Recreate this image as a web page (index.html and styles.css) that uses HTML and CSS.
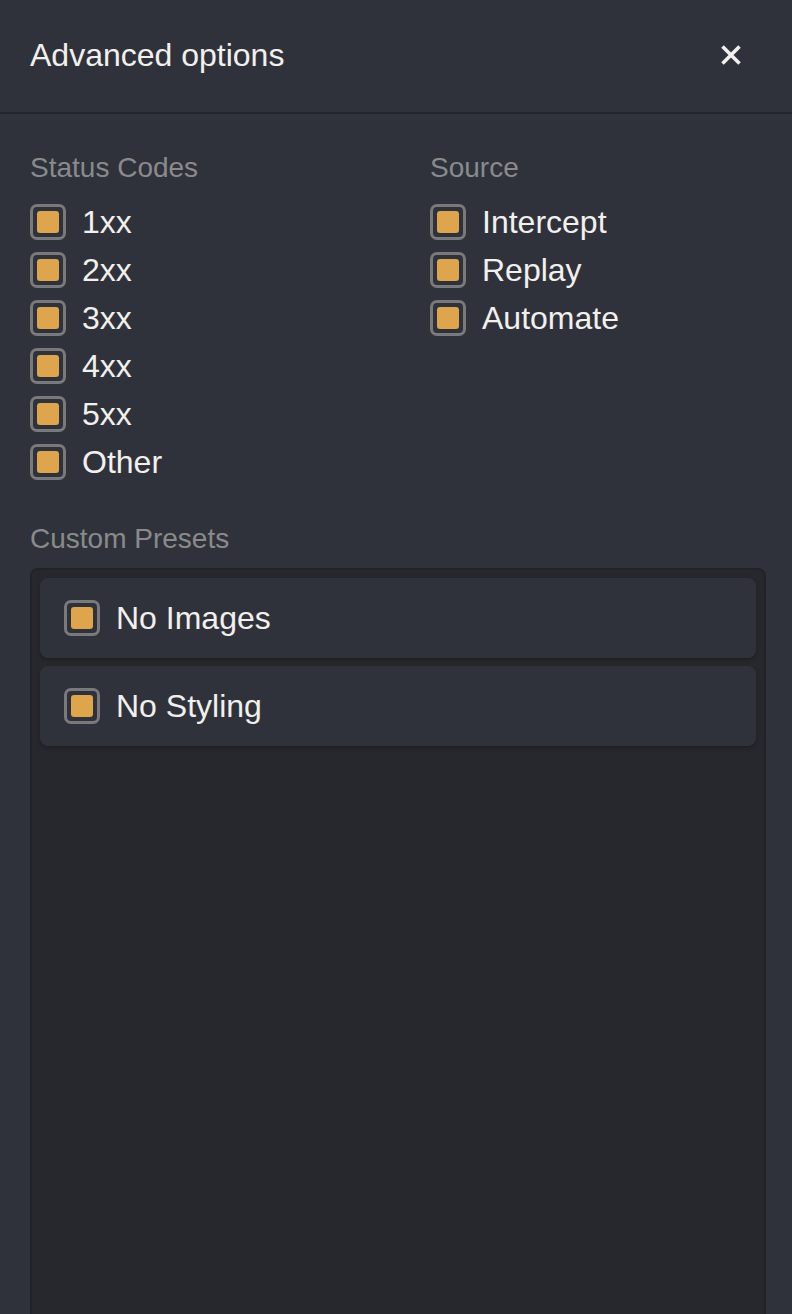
FILE: index.html
```html
<!DOCTYPE html>
<html lang="en">
<head>
<meta charset="utf-8">
<title>Advanced options</title>
<link rel="stylesheet" href="styles.css">
</head>
<body>
<div class="panel">
  <header class="header">
    <h1 class="title">Advanced options</h1>
    <button class="close" aria-label="Close">
      <svg width="22" height="22" viewBox="0 0 22 22"><path d="M2.5 2.5 L19.5 19.5 M19.5 2.5 L2.5 19.5" stroke="#f2f0ed" stroke-width="3.6" stroke-linecap="butt" fill="none"/></svg>
    </button>
  </header>
  <main class="content">
    <div class="columns">
      <section class="group">
        <h2 class="label">Status Codes</h2>
        <ul class="list">
          <li class="item"><span class="check"><span class="dot"></span></span>1xx</li>
          <li class="item"><span class="check"><span class="dot"></span></span>2xx</li>
          <li class="item"><span class="check"><span class="dot"></span></span>3xx</li>
          <li class="item"><span class="check"><span class="dot"></span></span>4xx</li>
          <li class="item"><span class="check"><span class="dot"></span></span>5xx</li>
          <li class="item"><span class="check"><span class="dot"></span></span>Other</li>
        </ul>
      </section>
      <section class="group">
        <h2 class="label">Source</h2>
        <ul class="list">
          <li class="item"><span class="check"><span class="dot"></span></span>Intercept</li>
          <li class="item"><span class="check"><span class="dot"></span></span>Replay</li>
          <li class="item"><span class="check"><span class="dot"></span></span>Automate</li>
        </ul>
      </section>
    </div>
    <section class="presets">
      <h2 class="label">Custom Presets</h2>
      <div class="preset-box">
        <div class="preset"><span class="check"><span class="dot"></span></span>No Images</div>
        <div class="preset"><span class="check"><span class="dot"></span></span>No Styling</div>
      </div>
    </section>
  </main>
</div>
</body>
</html>
```

FILE: styles.css
```css
* { box-sizing: border-box; }
html, body {
  margin: 0;
  padding: 0;
  height: 100%;
  background: #30323b;
  overflow: hidden;
}
body {
  font-family: "Liberation Sans", Arial, Helvetica, sans-serif;
  color: #f2f0ed;
}
.panel {
  display: flex;
  flex-direction: column;
  height: 100%;
}
.header {
  height: 114px;
  flex: none;
  display: flex;
  align-items: center;
  justify-content: space-between;
  padding: 0 50px 2px 30px;
  border-bottom: 2px solid #24252a;
}
.title {
  margin: 0;
  font-size: 32px;
  font-weight: 400;
  line-height: 36px;
}
.close {
  background: none;
  border: 0;
  padding: 0;
  width: 22px;
  height: 22px;
  display: flex;
  cursor: pointer;
}
.content {
  flex: 1;
  display: flex;
  flex-direction: column;
  padding: 38px 26px 0 30px;
  min-height: 0;
}
.columns {
  display: grid;
  grid-template-columns: 400px 1fr;
}
.label {
  margin: 0;
  font-size: 28px;
  font-weight: 400;
  line-height: 32px;
  color: #8a8a8c;
}
.list {
  list-style: none;
  margin: 20px 0 0;
  padding: 0;
  display: flex;
  flex-direction: column;
  gap: 12px;
}
.item, .preset {
  display: flex;
  align-items: center;
  gap: 16px;
  font-size: 32px;
  line-height: 36px;
  height: 36px;
}
.check {
  width: 36px;
  height: 36px;
  flex: none;
  border: 3px solid #7a7a7c;
  border-radius: 7px;
  padding: 4px;
  display: flex;
}
.dot {
  flex: 1;
  background: #dfa54c;
  border-radius: 3px;
}
.presets {
  margin-top: 43px;
  flex: 1;
  display: flex;
  flex-direction: column;
}
.preset-box {
  margin-top: 13px;
  flex: 1;
  min-height: 800px;
  background: #27282d;
  border: 2px solid #222328;
  border-radius: 8px;
  padding: 8px;
  display: flex;
  flex-direction: column;
  gap: 8px;
}
.preset {
  height: 80px;
  flex: none;
  background: #30323b;
  border-radius: 8px;
  padding: 0 24px;
  box-shadow: 0 2px 4px rgba(0, 0, 0, 0.25);
}
```
